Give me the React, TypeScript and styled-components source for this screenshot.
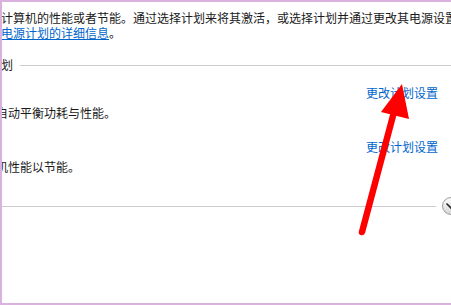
import React from "react";
import styled, { createGlobalStyle } from "styled-components";

const Global = createGlobalStyle`
  html, body { margin: 0; padding: 0; background: #fff; }
  body { font-family: "Noto Sans CJK SC", "Microsoft YaHei", sans-serif; }
`;

const Frame = styled.div`
  position: relative;
  width: 451px;
  height: 305px;
  box-sizing: border-box;
  border-left: 2px solid #dbb1dd;
  border-top: 2px solid #dbb1dd;
  border-bottom: 2px solid #dbb1dd;
  background: #fff;
  overflow: hidden;
  font-size: 12px;
  color: #1a1a1a;
`;

const Content = styled.div`
  margin-left: -8px;
  width: 468px;
  display: flex;
  flex-direction: column;
`;

const Intro = styled.p`
  margin: 8px 0 0;
  padding-left: 7px;
  line-height: 15px;
  white-space: nowrap;
`;

const Link = styled.a<{ $underline?: boolean }>`
  color: #0066cc;
  text-decoration: ${(p) => (p.$underline ? "underline" : "none")};
  cursor: pointer;
`;

const HeadingRow = styled.div`
  margin-top: 17px;
  padding-left: 7px;
  height: 16px;
  line-height: 16px;
  display: flex;
  align-items: center;
  gap: 7px;
  white-space: nowrap;
`;

const Rule = styled.div`
  flex: 1;
  height: 1px;
  background: #cccccc;
`;

const PlanList = styled.div`
  margin-top: 12px;
  display: flex;
  flex-direction: column;
  gap: 18px;
`;

const Plan = styled.div`
  display: flex;
  flex-direction: column;
  gap: 4px;
`;

const LinkRow = styled.div`
  display: flex;
  justify-content: flex-end;
  padding-right: 24px;
  line-height: 16px;
`;

const Desc = styled.div`
  padding-left: 2px;
  line-height: 16px;
  white-space: nowrap;
`;

const DividerRow = styled.div`
  margin-top: 22px;
  height: 18px;
  display: flex;
  align-items: center;
  gap: 6px;
  padding-right: 2px;
`;

const ExpandButton = styled.span`
  width: 18px;
  height: 18px;
  flex: none;
  box-sizing: border-box;
  border: 1px solid #9c9c9c;
  border-radius: 50%;
  background: linear-gradient(#fdfdfd, #d6d6d6);
  display: flex;
  align-items: center;
  justify-content: center;
`;

const Overlay = styled.svg`
  position: absolute;
  left: -2px;
  top: -2px;
  pointer-events: none;
`;

export default function App() {
  return (
    <>
      <Global />
      <Frame>
        <Content>
          <Intro>
            计算机的性能或者节能。通过选择计划来将其激活，或选择计划并通过更改其电源设置
            <br />
            <Link $underline>电源计划的详细信息</Link>。
          </Intro>
          <HeadingRow>
            <span>划</span>
            <Rule />
          </HeadingRow>
          <PlanList>
            <Plan>
              <LinkRow>
                <Link>更改计划设置</Link>
              </LinkRow>
              <Desc>自动平衡功耗与性能。</Desc>
            </Plan>
            <Plan>
              <LinkRow>
                <Link>更改计划设置</Link>
              </LinkRow>
              <Desc>机性能以节能。</Desc>
            </Plan>
          </PlanList>
          <DividerRow>
            <Rule />
            <ExpandButton>
              <svg width="16" height="16" viewBox="0 0 16 16">
                <path d="M3.5 5.5 L8 10 L12.5 5.5" fill="none" stroke="#2a2a2a" strokeWidth="1.6" />
              </svg>
            </ExpandButton>
          </DividerRow>
        </Content>
        <Overlay width="451" height="305" viewBox="0 0 451 305">
          <line x1="362" y1="232" x2="394" y2="112" stroke="#ff0000" strokeWidth="6.5" strokeLinecap="round" />
          <polygon points="402,84 381,112 409,119" fill="#ff0000" />
        </Overlay>
      </Frame>
    </>
  );
}
